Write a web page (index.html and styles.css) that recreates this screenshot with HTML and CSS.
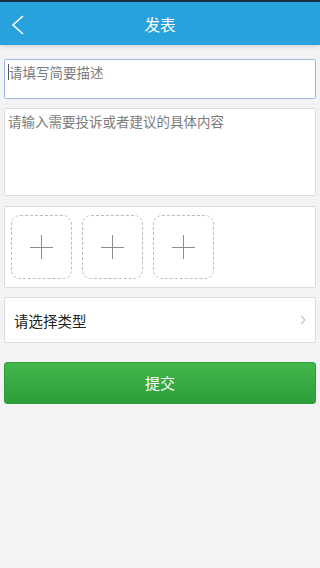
FILE: index.html
```html
<!DOCTYPE html>
<html lang="zh">
<head>
<meta charset="utf-8">
<title>发表</title>
<link rel="stylesheet" href="styles.css">
</head>
<body>
<div class="status"></div>
<header class="topbar">
  <span class="back">
    <svg width="14" height="20" viewBox="0 0 14 20"><path d="M12 1 L2 10 L12 19" fill="none" stroke="#fff" stroke-width="1.6"/></svg>
  </span>
  <h1 class="title">发表</h1>
</header>
<main class="content">
  <div class="field field-short focused"><span class="caret"></span><span class="ph">请填写简要描述</span></div>
  <div class="field field-long"><span class="ph">请输入需要投诉或者建议的具体内容</span></div>
  <div class="pics">
    <div class="tile"><span class="plus"></span></div>
    <div class="tile"><span class="plus"></span></div>
    <div class="tile"><span class="plus"></span></div>
  </div>
  <div class="select">
    <span class="select-label">请选择类型</span>
    <svg class="chev" width="6" height="10" viewBox="0 0 6 10"><path d="M1 1 L5 5 L1 9" fill="none" stroke="#c4c4c4" stroke-width="1.2"/></svg>
  </div>
  <button class="submit">提交</button>
</main>
</body>
</html>
```
FILE: styles.css
```css
* { box-sizing: border-box; }
html, body { margin: 0; padding: 0; }
body {
  width: 320px;
  height: 568px;
  background: #f3f3f5;
  font-family: "Noto Sans CJK SC", "Noto Sans", sans-serif;
  overflow: hidden;
}
.status { height: 2px; background: #1d3047; }
.topbar {
  height: 43px;
  background: #28a2dd;
  display: flex;
  align-items: center;
  justify-content: center;
  position: relative;
  box-shadow: 0 2px 4px rgba(0,0,0,0.12);
}
.back {
  position: absolute;
  left: 11px;
  top: 13px;
  display: flex;
}
.title {
  margin: 0;
  font-size: 15.5px;
  font-weight: normal;
  color: #fff;
  line-height: 20px;
}
.content {
  padding: 14px 4px 0;
  display: flex;
  flex-direction: column;
}
.field {
  background: #fff;
  border: 1px solid #dcdcdc;
  border-radius: 2px;
  padding: 2px 6px 0 3px;
  display: flex;
  align-items: flex-start;
  font-size: 13.5px;
  line-height: 20px;
  color: #7c7c7c;
}
.field-short { height: 40px; }
.field-short.focused { border-color: #9db8e3; }
.field-long { height: 88px; margin-top: 9px; }
.caret {
  width: 1px;
  height: 16px;
  background: #555;
  margin-top: 2px;
  margin-right: 0;
}
.pics {
  margin-top: 10px;
  height: 82px;
  background: #fff;
  border: 1px solid #dcdcdc;
  border-radius: 2px;
  padding: 8px 6px;
  display: flex;
  gap: 10px;
}
.tile {
  width: 61px;
  height: 64px;
  border: 1px dashed #bdbdbd;
  border-radius: 9px;
  display: flex;
  align-items: center;
  justify-content: center;
}
.plus {
  width: 23px;
  height: 24px;
  position: relative;
  display: block;
}
.plus::before, .plus::after {
  content: "";
  position: absolute;
  background: #8c8c8c;
}
.plus::before { left: 0; right: 0; top: 11.5px; height: 1px; }
.plus::after { top: 0; bottom: 0; left: 11px; width: 1px; }
.select {
  margin-top: 9px;
  height: 46px;
  background: #fff;
  border: 1px solid #dcdcdc;
  border-radius: 2px;
  display: flex;
  align-items: center;
  justify-content: space-between;
  padding: 0 9px 0 9px;
}
.select-label {
  font-size: 14.5px;
  color: #222;
}
.chev { margin-right: 0; }
.submit {
  margin-top: 19px;
  height: 42px;
  width: 100%;
  border: 1px solid #2f9a3b;
  border-radius: 3px;
  background: linear-gradient(#42b84c, #2d9d3a);
  color: #fff;
  font-family: "Noto Sans CJK SC", "Noto Sans", sans-serif;
  font-size: 15px;
  line-height: 20px;
  padding: 0 0 1px;
}
```
